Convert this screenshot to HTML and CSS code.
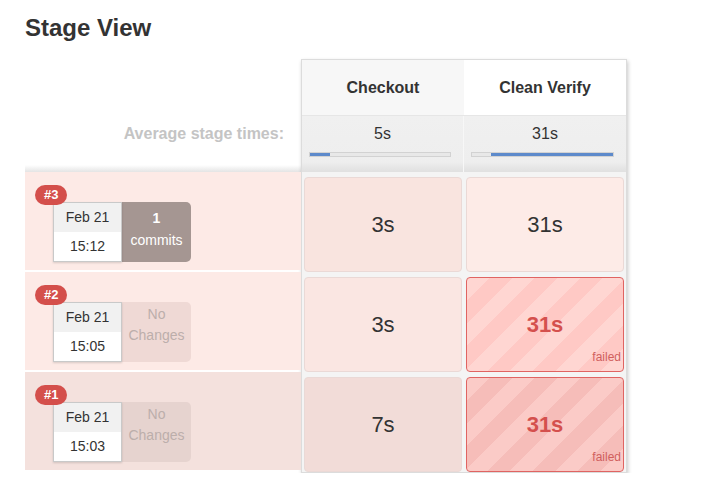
FILE: index.html
```html
<!DOCTYPE html>
<html>
<head>
<meta charset="utf-8">
<link rel="stylesheet" href="styles.css">
</head>
<body>
<h1 class="title">Stage View</h1>
<div class="stage-view">
  <div class="builds">
    <div class="builds-head"></div>
    <div class="builds-avg">Average stage times:</div>
    <div class="build build-3">
      <span class="badge">#3</span>
      <div class="build-info">
        <div class="date">
          <div class="date-day">Feb 21</div>
          <div class="date-time">15:12</div>
        </div>
        <div class="changes changes-has"><b>1</b><br>commits</div>
      </div>
    </div>
    <div class="build build-2">
      <span class="badge">#2</span>
      <div class="build-info">
        <div class="date">
          <div class="date-day">Feb 21</div>
          <div class="date-time">15:05</div>
        </div>
        <div class="changes changes-none">No<br>Changes</div>
      </div>
    </div>
    <div class="build build-1">
      <span class="badge">#1</span>
      <div class="build-info">
        <div class="date">
          <div class="date-day">Feb 21</div>
          <div class="date-time">15:03</div>
        </div>
        <div class="changes changes-none changes-dark">No<br>Changes</div>
      </div>
    </div>
  </div>
  <div class="panel">
    <div class="head-row">
      <div class="head-cell head-gray">Checkout</div>
      <div class="head-cell">Clean Verify</div>
    </div>
    <div class="avg-row">
      <div class="avg-cell">
        <div class="avg-time">5s</div>
        <div class="bar"><div class="fill fill-checkout"></div></div>
      </div>
      <div class="avg-cell">
        <div class="avg-time">31s</div>
        <div class="bar"><div class="fill fill-verify"></div></div>
      </div>
    </div>
    <div class="row">
      <div class="cell cell-ok c3a">3s</div>
      <div class="cell cell-ok c3b">31s</div>
    </div>
    <div class="row">
      <div class="cell cell-ok c2a">3s</div>
      <div class="cell cell-failed">31s<span class="failed">failed</span></div>
    </div>
    <div class="row">
      <div class="cell cell-ok c1a">7s</div>
      <div class="cell cell-failed cell-failed-dark">31s<span class="failed">failed</span></div>
    </div>
  </div>
</div>
</body>
</html>
```

FILE: styles.css
```css
html, body {
  margin: 0;
  padding: 0;
  background: #fff;
}
body {
  padding: 0 25px;
  font-family: "Liberation Sans", Arial, sans-serif;
  color: #333;
}
.title {
  margin: 14px 0 17px;
  font-size: 24px;
  line-height: 28px;
  font-weight: bold;
  color: #333;
}
.stage-view {
  display: flex;
  align-items: flex-start;
}
.builds {
  width: 276px;
  flex: none;
}
.builds-head {
  height: 56px;
}
.builds-avg {
  height: 57px;
  box-sizing: border-box;
  padding: 9px 17px 0 0;
  text-align: right;
  font-size: 16px;
  line-height: 20px;
  font-weight: bold;
  color: #c4c4c4;
  background: linear-gradient(#fff 0, #fff 50px, #e4e4e4 57px);
}
.build {
  position: relative;
  height: 98px;
  margin-bottom: 2px;
  background: #fdeae6;
}
.build-1 {
  background: #f4e1dd;
}
.badge {
  position: absolute;
  left: 10px;
  top: 13px;
  z-index: 2;
  height: 20px;
  line-height: 20px;
  padding: 0 9px;
  border-radius: 10px;
  background: #d44f4b;
  color: #fff;
  font-size: 13px;
  font-weight: bold;
}
.build-info {
  display: flex;
  padding: 30px 0 0 28px;
}
.date {
  width: 69px;
  height: 60px;
  box-sizing: border-box;
  border: 1px solid #c9c9c9;
  box-shadow: 0 1px 2px rgba(0,0,0,0.15);
  font-size: 14px;
  text-align: center;
  color: #333;
  position: relative;
  z-index: 1;
}
.date-day {
  height: 29px;
  line-height: 29px;
  background: #f1f1f1;
}
.date-time {
  height: 29px;
  line-height: 29px;
  background: #fff;
}
.changes {
  width: 69px;
  height: 60px;
  box-sizing: border-box;
  padding-top: 5px;
  border-radius: 0 5px 5px 0;
  text-align: center;
  font-size: 14px;
  line-height: 22px;
}
.changes-has {
  background: #a59692;
  color: #fff;
}
.changes-none {
  background: #efd9d5;
  color: #bcaeab;
  padding-top: 2px;
  line-height: 21px;
}
.changes-dark {
  background: #e6d3cf;
}
.panel {
  width: 324px;
  flex: none;
  border: 1px solid #dcdcdc;
  background: #f4f4f4;
  box-shadow: 1px 2px 4px rgba(0,0,0,0.22);
}
.head-row {
  display: flex;
  height: 55px;
}
.head-cell {
  width: 162px;
  display: flex;
  align-items: center;
  justify-content: center;
  font-size: 16px;
  font-weight: bold;
  color: #333;
  background: #fff;
}
.head-gray {
  background: #f7f7f7;
}
.avg-row {
  display: flex;
  height: 57px;
  border-top: 1px solid #e6e6e6;
  box-sizing: border-box;
}
.avg-cell {
  width: 162px;
  box-sizing: border-box;
  padding-top: 8px;
  background: linear-gradient(#f0f0f0 0, #eeeeee 46px, #e0e0e0 56px);
  border-right: 1px solid #f7f7f7;
}
.avg-cell:last-child {
  border-right: 0;
}
.avg-time {
  text-align: center;
  font-size: 16px;
  line-height: 20px;
  color: #333;
}
.bar {
  margin: 8px 12px 0 7px;
  height: 5px;
  box-sizing: border-box;
  border: 1px solid #d2d2d2;
  background: #e8e8e8;
  display: flex;
}
.fill {
  height: 100%;
  background: #5d8acb;
}
.fill-checkout {
  width: 20px;
}
.fill-verify {
  margin-left: 19px;
  flex: 1;
}
.row {
  display: flex;
  height: 100px;
}
.cell {
  position: relative;
  width: 158px;
  height: 95px;
  margin: 5px 2px 0;
  box-sizing: border-box;
  border-radius: 4px;
  display: flex;
  align-items: center;
  justify-content: center;
  font-size: 22px;
  color: #333;
}
.cell-ok {
  border: 1px solid #ead9d6;
}
.c3a {
  background: #f9e4df;
}
.c3b {
  background: #fdebe7;
}
.c2a {
  background: #fae6e2;
}
.c1a {
  background: #f2dcd8;
}
.cell-failed {
  border: 1.5px solid #e06462;
  font-weight: bold;
  color: #d4504d;
  background: repeating-linear-gradient(135deg, #ffd6d2 0, #ffd6d2 16px, #ffc9c5 16px, #ffc9c5 32px);
}
.cell-failed-dark {
  background: repeating-linear-gradient(135deg, #fbcbc7 0, #fbcbc7 16px, #f6bdb9 16px, #f6bdb9 32px);
}
.failed {
  position: absolute;
  right: 2px;
  bottom: 7px;
  font-size: 12px;
  font-weight: normal;
  color: #d0605e;
}
```
